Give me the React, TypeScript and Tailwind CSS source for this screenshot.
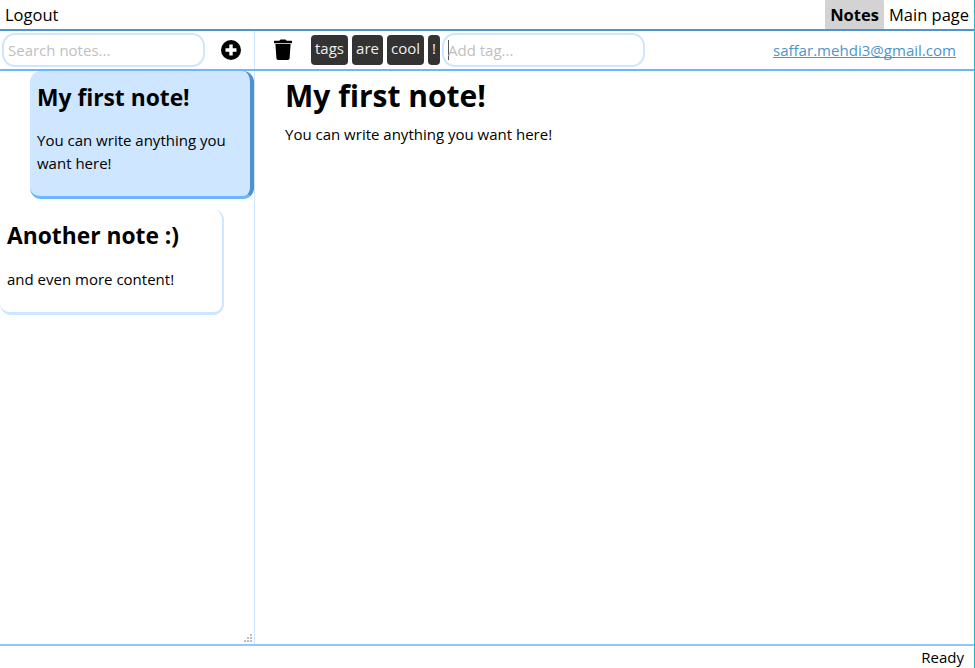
const tags = [
  { label: 'tags', width: 'w-[37px]' },
  { label: 'are', width: 'w-[31px]' },
  { label: 'cool', width: 'w-[37px]' },
  { label: '!', width: 'w-[12px]' },
];

function AddIcon() {
  return (
    <svg width="20" height="20" viewBox="0 0 20 20" className="shrink-0">
      <circle cx="10" cy="10" r="10" fill="#000" />
      <path d="M10 4.500v11M4.500 10h11" stroke="#fff" strokeWidth="3.4" />
    </svg>
  );
}

function TrashIcon() {
  return (
    <svg width="18" height="22" viewBox="0 0 18 22" className="shrink-0">
      <path d="M.5 1.700H5.400Q6 .6 7 .6h4q1 0 1.600 1.100h4.900q.5 0 .5.500v1.500q0 .5-.5.500H.5Q0 4.200 0 3.700V2.200Q0 1.700.5 1.700Z" />
      <path d="M1.400 5.100h15.200l-1 14.200Q15.500 21 13.800 21H4.200Q2.500 21 2.400 19.300Z" />
    </svg>
  );
}

function ResizeGrip() {
  return (
    <svg width="8" height="8" viewBox="0 0 8 8" fill="#bdbdbd" shapeRendering="crispEdges" className="mr-0.5 mb-0.5">
      <path d="M6 0h2v2H6zM3 3h2v2H3zM6 3h2v2H6zM0 6h2v2H0zM3 6h2v2H3zM6 6h2v2H6z" />
    </svg>
  );
}

export default function App() {
  return (
    <div className="flex h-[668px] w-[975px] flex-col overflow-hidden border-r border-[#20bfc5] bg-white font-['Open_Sans',sans-serif] text-black">
      <header className="flex h-[31px] shrink-0 justify-between border-b-2 border-[#4f94cd] text-[16.500px] leading-[30px]">
        <a className="pl-[5px]">Logout</a>
        <nav className="flex">
          <a className="w-[59px] bg-[#d3d3d3] text-center font-bold">Notes</a>
          <a className="w-[90px] pl-[5px] whitespace-nowrap">Main page</a>
        </nav>
      </header>
      <div className="flex h-10 shrink-0 border-b-2 border-[#6db5ff]">
        <div className="flex w-[255px] shrink-0 items-center border-r border-[#cee6ff] pl-0.5">
          <input
            placeholder="Search notes..."
            className="h-[34px] w-[203px] rounded-[13px] border-2 border-[#cee6ff] px-1 text-[15px] placeholder:text-[#bfbfbf]"
          />
          <div className="ml-4">
            <AddIcon />
          </div>
        </div>
        <div className="flex min-w-0 flex-1 items-center pl-[19px]">
          <TrashIcon />
          <div className="ml-[19px] flex gap-1">
            {tags.map((tag) => (
              <span
                key={tag.label}
                className={`h-[30px] rounded-[4px] bg-[#333] text-center text-[15px] leading-[27px] text-[#eee] ${tag.width}`}
              >
                {tag.label}
              </span>
            ))}
          </div>
          <div className="ml-0.5 flex h-[34px] w-[203px] items-center rounded-[13px] border-2 border-[#cee6ff] pl-1">
            <span className="h-5 w-px shrink-0 bg-[#555]" />
            <input placeholder="Add tag..." className="-ml-px w-[180px] text-[15px] placeholder:text-[#bfbfbf]" />
          </div>
          <a className="mr-[18px] ml-auto text-[15.050px] text-[#4f94cd] underline [text-decoration-skip-ink:none]">
            saffar.mehdi3@gmail.com
          </a>
        </div>
      </div>
      <main className="flex min-h-0 flex-1">
        <aside className="flex w-[255px] shrink-0 flex-col border-r border-[#cee6ff]">
          <article className="ml-[30px] h-[128px] rounded-[11px] border-r-4 border-b-[3px] border-r-[#4f90cd] border-b-[#6db5ff] bg-[#cee6ff] pt-[10px] pl-[7px]">
            <h2 className="text-[22.800px] leading-[34px] font-bold">My first note!</h2>
            <p className="mt-[14px] w-[200px] text-[15px] leading-[23px]">You can write anything you want here!</p>
          </article>
          <article className="mt-[10px] h-[106px] w-[224px] rounded-[11px] border-r-2 border-b-[3px] border-[#cee6ff] pt-[10px] pl-[7px]">
            <h2 className="text-[22.800px] leading-[34px] font-bold">Another note :)</h2>
            <p className="mt-[15px] text-[15px] leading-[23px]">and even more content!</p>
          </article>
          <div className="mt-auto flex justify-end">
            <ResizeGrip />
          </div>
        </aside>
        <section className="pt-[3px] pl-[30px]">
          <h1 className="text-[30px] leading-[44px] font-bold">My first note!</h1>
          <p className="mt-[5px] text-[15px] leading-[23px]">You can write anything you want here!</p>
        </section>
      </main>
      <footer className="h-6 shrink-0 border-t-2 border-[#8fc6ff] pr-[10px] text-right text-[15px] leading-[23px]">
        Ready
      </footer>
    </div>
  );
}
